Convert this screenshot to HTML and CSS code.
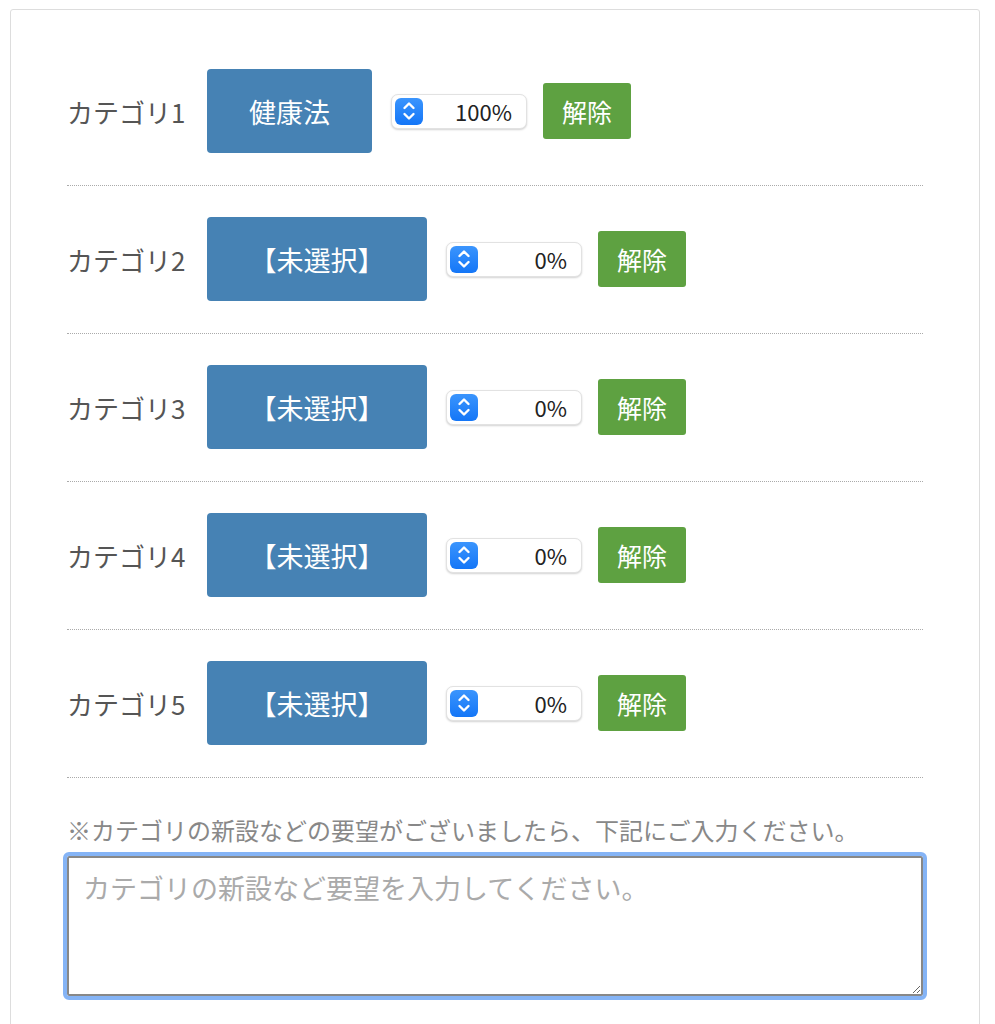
FILE: index.html
```html
<!DOCTYPE html>
<html lang="ja">
<head>
    <meta charset="utf-8" />
    <title>カテゴリ設定</title>
    <link rel="stylesheet" href="styles.css">
</head>
<body>
<!--カテゴリ設定-->
<div class="card">
    <div class="row">
        <span class="label">カテゴリ1</span>
        <a class="cat-btn short">健康法</a>
        <div class="rate">
            <span class="stepper"><svg width="16" height="22" viewBox="0 0 16 22"><path d="M3.5 8 L8 3.5 L12.5 8 M3.5 14 L8 18.5 L12.5 14" fill="none" stroke="#fff" stroke-width="2.4" stroke-linecap="round" stroke-linejoin="round"/></svg></span>
            <span class="value">100%</span>
        </div>
        <a class="clear-btn">解除</a>
    </div>
    <div class="row">
        <span class="label">カテゴリ2</span>
        <a class="cat-btn">【未選択】</a>
        <div class="rate">
            <span class="stepper"><svg width="16" height="22" viewBox="0 0 16 22"><path d="M3.5 8 L8 3.5 L12.5 8 M3.5 14 L8 18.5 L12.5 14" fill="none" stroke="#fff" stroke-width="2.4" stroke-linecap="round" stroke-linejoin="round"/></svg></span>
            <span class="value">0%</span>
        </div>
        <a class="clear-btn">解除</a>
    </div>
    <div class="row">
        <span class="label">カテゴリ3</span>
        <a class="cat-btn">【未選択】</a>
        <div class="rate">
            <span class="stepper"><svg width="16" height="22" viewBox="0 0 16 22"><path d="M3.5 8 L8 3.5 L12.5 8 M3.5 14 L8 18.5 L12.5 14" fill="none" stroke="#fff" stroke-width="2.4" stroke-linecap="round" stroke-linejoin="round"/></svg></span>
            <span class="value">0%</span>
        </div>
        <a class="clear-btn">解除</a>
    </div>
    <div class="row">
        <span class="label">カテゴリ4</span>
        <a class="cat-btn">【未選択】</a>
        <div class="rate">
            <span class="stepper"><svg width="16" height="22" viewBox="0 0 16 22"><path d="M3.5 8 L8 3.5 L12.5 8 M3.5 14 L8 18.5 L12.5 14" fill="none" stroke="#fff" stroke-width="2.4" stroke-linecap="round" stroke-linejoin="round"/></svg></span>
            <span class="value">0%</span>
        </div>
        <a class="clear-btn">解除</a>
    </div>
    <div class="row">
        <span class="label">カテゴリ5</span>
        <a class="cat-btn">【未選択】</a>
        <div class="rate">
            <span class="stepper"><svg width="16" height="22" viewBox="0 0 16 22"><path d="M3.5 8 L8 3.5 L12.5 8 M3.5 14 L8 18.5 L12.5 14" fill="none" stroke="#fff" stroke-width="2.4" stroke-linecap="round" stroke-linejoin="round"/></svg></span>
            <span class="value">0%</span>
        </div>
        <a class="clear-btn">解除</a>
    </div>

    <p class="note">※カテゴリの新設などの要望がございましたら、下記にご入力ください。</p>
    <textarea class="request" placeholder="カテゴリの新設など要望を入力してください。"></textarea>
</div>
</body>
</html>
```

FILE: styles.css
```css
/*清除默认样式*/
body,div,p{padding:0; margin:0;}
body{background:#fff; font-family:"Noto Sans CJK JP", "Noto Sans", sans-serif; color:#555;}

/*外枠*/
.card{margin:9px 0 0 10px; width:970px; height:1100px; border:1px solid #ddd; border-radius:3px; padding:28px 56px 0; box-sizing:border-box;}

/*カテゴリ行*/
.row{display:flex; align-items:center; padding:31px 0 32px; border-bottom:1px dotted #aaa;}
.label{width:140px; font-size:26px; color:#555; white-space:nowrap;}

.cat-btn{display:flex; align-items:center; justify-content:center; width:220px; height:84px; background:#4682b4; color:#fff; font-size:27px; border-radius:4px; cursor:pointer;}
.cat-btn.short{width:165px;}

.rate{display:flex; align-items:center; width:136px; height:35px; margin-left:19px; border:1px solid #e2e2e2; border-radius:7px; box-shadow:0 1px 2px rgba(0,0,0,.18); box-sizing:border-box; background:#fff;}
.stepper{display:flex; align-items:center; justify-content:center; width:28px; height:27px; margin-left:3px; border-radius:6px; background:linear-gradient(#3b95fd, #1476f7);}
.value{flex:1; text-align:right; padding-right:14px; font-size:22px; color:#222;}

.clear-btn{display:flex; align-items:center; justify-content:center; width:88px; height:56px; margin-left:16px; background:#5ea141; color:#fff; font-size:25px; border-radius:3px; cursor:pointer;}

/*要望欄*/
.note{margin-top:35px; font-size:24px; line-height:33px; color:#888; white-space:nowrap;}
.request{display:block; width:100%; height:140px; margin-top:10px; box-sizing:border-box; border:2px solid #888; outline:4px solid #85b4f6; border-radius:2px; padding:10px 14px; font-family:"Noto Sans CJK JP", sans-serif; font-size:27px; resize:both;}
.request::placeholder{color:#aaa;}
```
